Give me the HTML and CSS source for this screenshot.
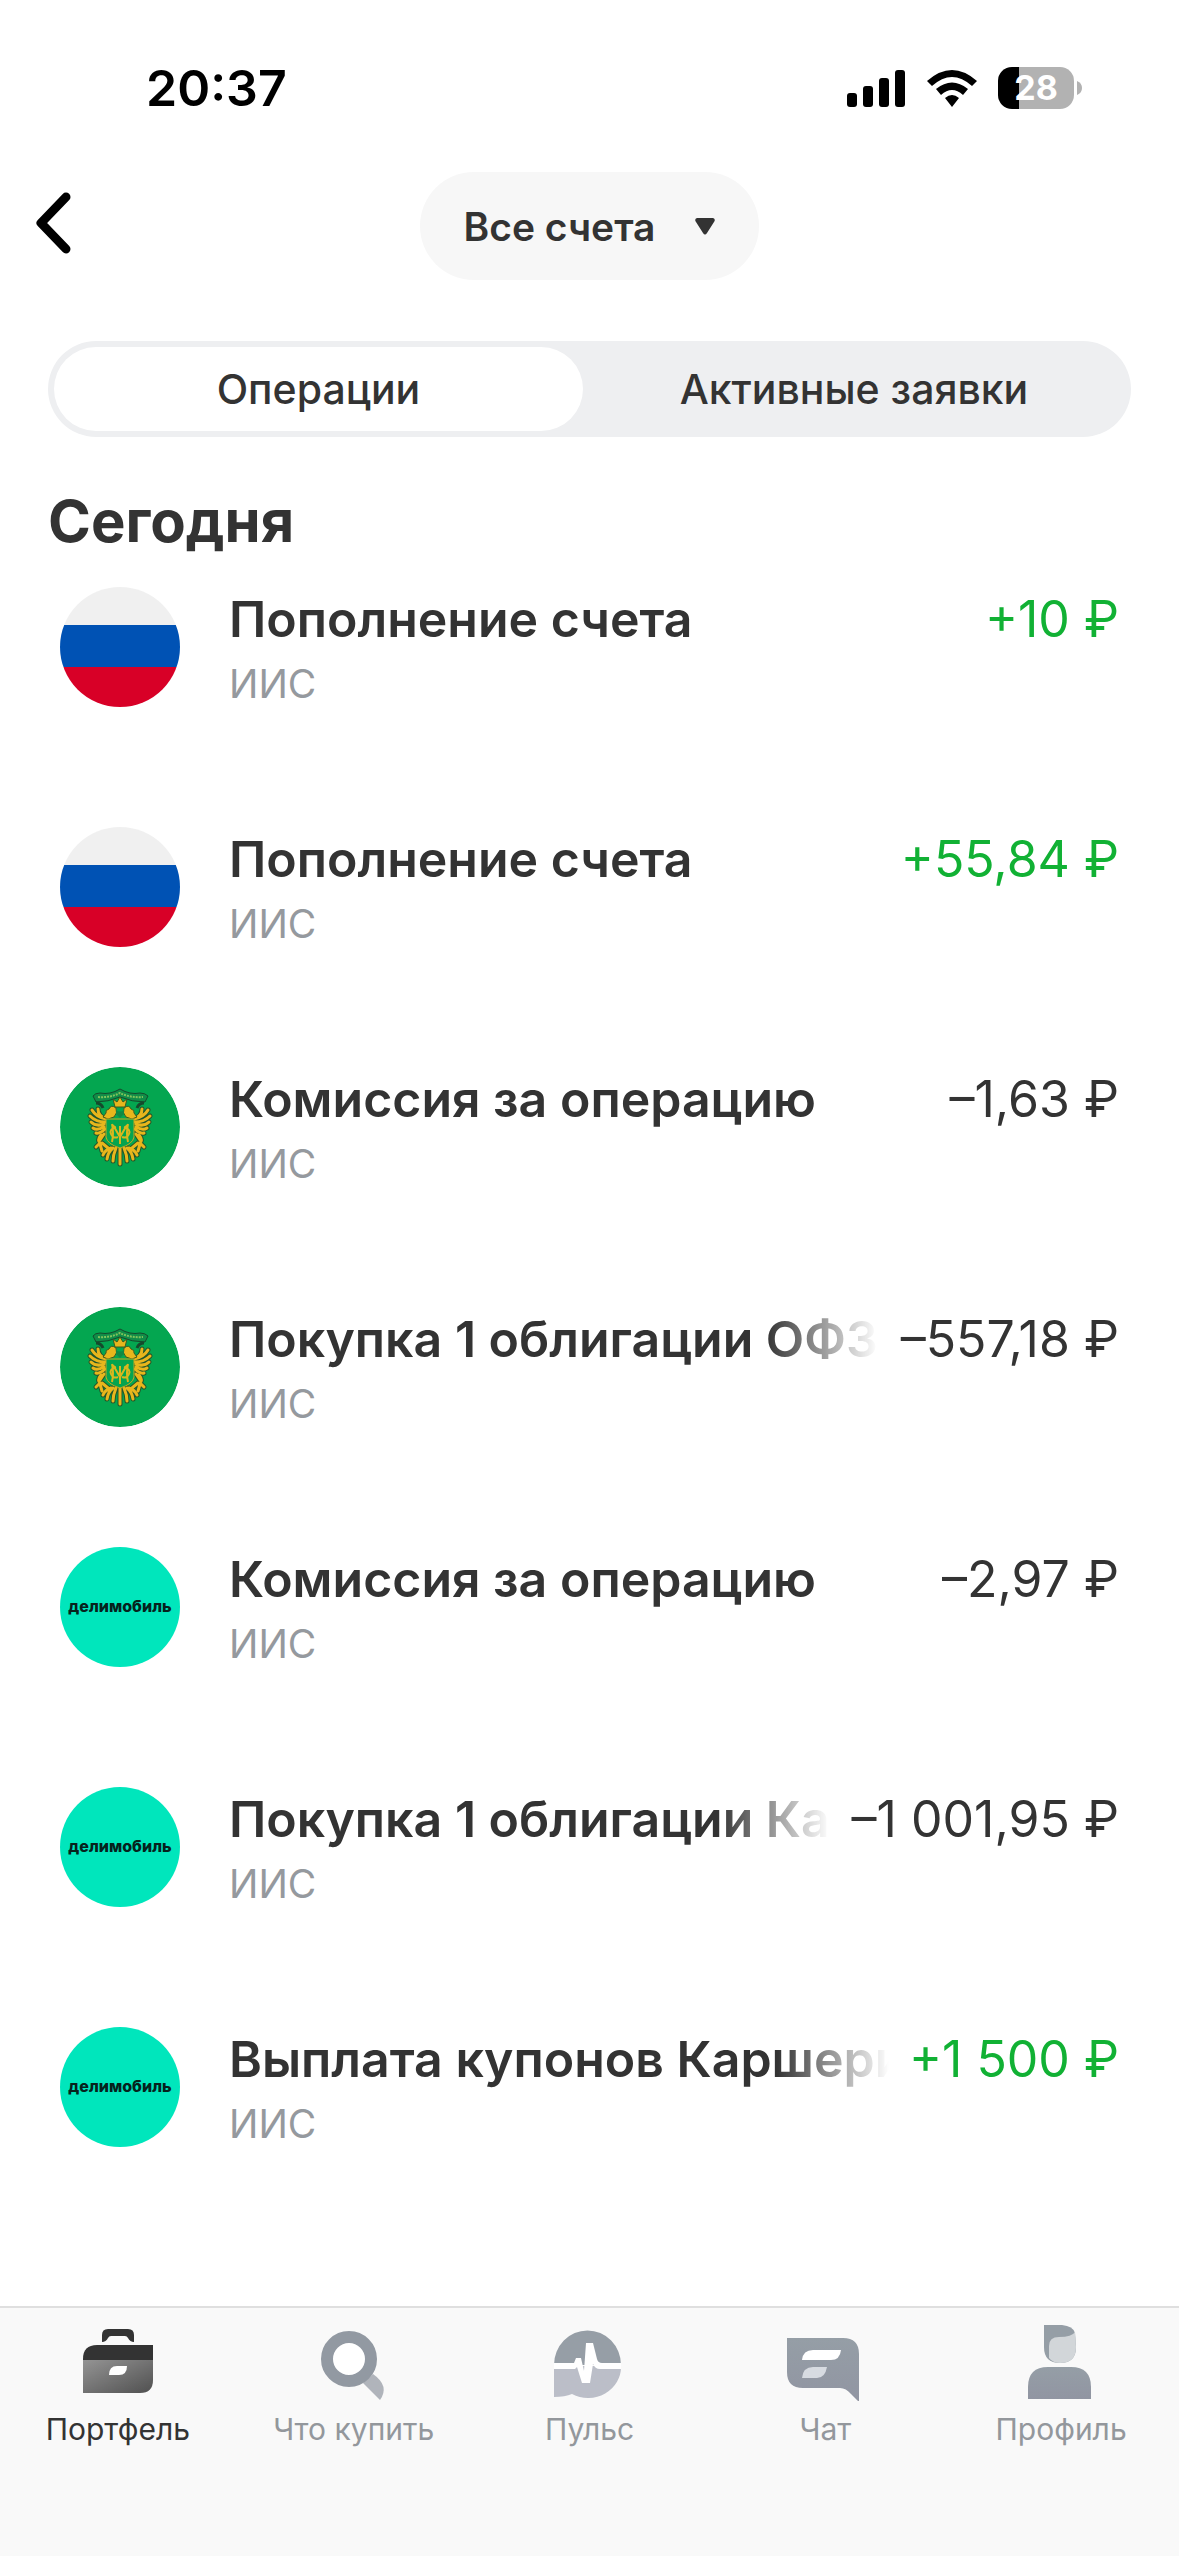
FILE: index.html
```html
<!DOCTYPE html>
<html lang="ru">
<head>
<meta charset="utf-8">
<meta name="viewport" content="width=device-width, initial-scale=1">
<title>Операции</title>
<link rel="stylesheet" href="styles.css">
</head>
<body>
<svg class="defs" aria-hidden="true">
  <defs>
    <linearGradient id="case" x1="0" y1="0" x2="1" y2="1"><stop offset="0" stop-color="#949494"/><stop offset="1" stop-color="#505050"/></linearGradient>
    <linearGradient id="steel" x1="0" y1="0" x2="0" y2="1"><stop offset="0" stop-color="#959ea6"/><stop offset="1" stop-color="#9195a2"/></linearGradient>
    <g id="plumage" fill="none" stroke-linecap="round">
      <path d="M46 52Q36 50 32 43M45 55Q36 55 30 49M44 57Q36 60 31 55M44 60Q37 64 33 61M45 62Q40 67 36 66M38 42Q38 49 46 52"/>
      <path d="M74 52Q84 50 88 43M75 55Q84 55 90 49M76 57Q84 60 89 55M76 60Q83 64 87 61M75 62Q80 67 84 66M82 42Q82 49 74 52"/>
      <path d="M44 67L40 73M41 68Q37 73 40 76M40 76L36 80M40 77L42 84M42 76L48 81M76 67L80 73M79 68Q83 73 80 76M80 76L84 80M80 77L78 84M78 76L72 81"/>
      <path d="M60 81V97M56 81Q53 88 53 94M64 81Q67 88 67 94M53 81Q48 85 47 92M67 81Q72 85 73 92M51 81Q45 83 43 88M69 81Q75 83 77 88"/>
    </g>
    <symbol id="emblem" viewBox="0 0 120 120">
      <circle cx="60" cy="60" r="60" fill="#04a650"/>
      <path d="M33 29Q35 26 40 26Q50 28 60 22Q70 28 80 26Q85 26 88 29L85 35Q72 35 60 30Q48 35 36 35Z" fill="#118c48" stroke="#164a2c"/>
      <path d="M38 30Q50 31 60 26Q70 31 83 30" fill="none" stroke="#7fc45a" stroke-width="2" stroke-dasharray="2 1"/>
      <path d="M36 36q5 0 7 5M84 36q-5 0-7 5" fill="none" stroke="#164a2c" stroke-width="3"/>
      <use href="#plumage" stroke="#24552a" stroke-width="5"/>
      <use href="#plumage" stroke="#e8b61c" stroke-width="3"/>
      <g fill="#e8b61c" stroke="#3c5a20" stroke-width="1">
        <path d="M55 40l-2-8 4 3 3-5 3 5 4-3-2 8z"/>
        <path d="M46 46Q45 43 49 42Q51 37 56 41Q58 46 54 50L48 52L43 50ZM74 46Q75 43 71 42Q69 37 64 41Q62 46 66 50L72 52L77 50Z"/>
      </g>
      <path d="M46 52H74V70Q73 77 60 81Q47 77 46 70Z" fill="#05a44f" stroke="#c3a922" stroke-width="1"/>
      <path d="M52 57Q54 66 52 75M68 57Q66 66 68 75M53 58L60 70L67 58M60 59V77M56 60Q49 62 51 67Q53 72 58 70M64 60Q71 62 69 67Q67 72 62 70" fill="none" stroke="#d9b71e" stroke-width="2"/>
      <path d="M56 43q4 3 8 0v4l-4 4-4-4z" fill="#128844"/>
    </symbol>
  </defs>
</svg>
<div class="screen">
  <div class="status">
    <span class="clock">20:37</span>
    <div class="indicators">
      <svg class="signal" viewBox="0 0 60 40" aria-hidden="true"><rect x="1" y="25" width="10" height="14" rx="3"/><rect x="17" y="18" width="10" height="21" rx="3"/><rect x="33" y="10" width="10" height="29" rx="3"/><rect x="49" y="2" width="10" height="37" rx="3"/></svg>
      <svg class="wifi" viewBox="0 0 52 40" aria-hidden="true"><path d="M1 13Q26-9 51 13L46 18Q26 0 6 18ZM10 21Q26 8 42 21L37 27Q26 17 15 27ZM19 30Q26 24 33 30L26 39Z"/></svg>
      <div class="battery"><span class="level">28</span><svg viewBox="0 0 5 14" aria-hidden="true"><path d="M0 0Q5 2 5 7T0 14Z" fill="#b2b2b2"/></svg></div>
    </div>
  </div>
  <header class="header">
    <button class="back" aria-label="Назад"><svg viewBox="0 0 36 62" aria-hidden="true"><path d="M31 5L6 31L31 57" fill="none" stroke="#000" stroke-width="9" stroke-linecap="round" stroke-linejoin="round"/></svg></button>
    <button class="account">Все счета<svg viewBox="0 0 20 17" aria-hidden="true"><path d="M2 0H18Q21 1 19 4L12 15Q10 18 8 15L1 4Q-1 1 2 0Z" fill="#333"/></svg></button>
  </header>
  <main class="content">
    <div class="tabs" role="tablist">
      <button class="tab active" role="tab" aria-selected="true">Операции</button>
      <button class="tab" role="tab" aria-selected="false">Активные заявки</button>
    </div>
    <h1 class="day">Сегодня</h1>
    <ul class="operations">
      <li class="operation"><span class="avatar flag"></span><div class="details"><div class="line"><span class="name">Пополнение счета</span><span class="sum income">+10 ₽</span></div><span class="kind">ИИС</span></div></li>
      <li class="operation"><span class="avatar flag"></span><div class="details"><div class="line"><span class="name">Пополнение счета</span><span class="sum income">+55,84 ₽</span></div><span class="kind">ИИС</span></div></li>
      <li class="operation"><svg class="avatar" aria-hidden="true"><use href="#emblem"/></svg><div class="details"><div class="line"><span class="name">Комиссия за операцию</span><span class="sum">–1,63 ₽</span></div><span class="kind">ИИС</span></div></li>
      <li class="operation"><svg class="avatar" aria-hidden="true"><use href="#emblem"/></svg><div class="details"><div class="line"><span class="name faded">Покупка 1 облигации ОФЗ</span><span class="sum">–557,18 ₽</span></div><span class="kind">ИИС</span></div></li>
      <li class="operation"><span class="avatar brand">делимобиль</span><div class="details"><div class="line"><span class="name">Комиссия за операцию</span><span class="sum">–2,97 ₽</span></div><span class="kind">ИИС</span></div></li>
      <li class="operation"><span class="avatar brand">делимобиль</span><div class="details"><div class="line"><span class="name faded">Покупка 1 облигации Ка</span><span class="sum">–1 001,95 ₽</span></div><span class="kind">ИИС</span></div></li>
      <li class="operation"><span class="avatar brand">делимобиль</span><div class="details"><div class="line"><span class="name faded">Выплата купонов Каршери</span><span class="sum income">+1 500 ₽</span></div><span class="kind">ИИС</span></div></li>
    </ul>
  </main>
  <nav class="bottom">
    <a class="item current" href="#"><svg viewBox="0 0 80 80" aria-hidden="true"><path d="M24 21V14Q24 8 30 8H50Q56 8 56 14V21Q52 21 50 17Q49 15 47 15H33Q31 15 30 17Q28 21 24 21Z" fill="#333"/><path d="M5 39V38Q5 24 19 24H75V39Z" fill="#333"/><path d="M5 39H75V59Q75 72 62 72H5Z" fill="url(#case)"/><path d="M31 54Q31 45 39 45H49Q49 54 41 54Z" fill="#fff"/></svg>Портфель</a>
    <a class="item" href="#"><svg viewBox="0 0 80 80" aria-hidden="true"><path d="M49 62L59 53Q76 65 66 79Z" fill="#b0b4bb"/><circle cx="35" cy="38" r="22" fill="#fff" stroke="#9299a2" stroke-width="12"/></svg>Что купить</a>
    <a class="item" href="#"><svg viewBox="0 0 80 80" aria-hidden="true"><path d="M5 44A33 34 0 0 1 72 44Z" fill="#969ea6"/><path d="M5 45H72A33 31 0 0 1 23 73Q16 76 5 76Z" fill="#bbbec8"/><path d="M5 42H25L27 37H32L35 50L37 22H44L48 38Q49 42 53 42H72V48H51Q46 48 44 43L41 62H33L28 46L26 48H5Z" fill="#fff"/></svg>Пульс</a>
    <a class="item" href="#"><svg viewBox="0 0 80 80" aria-hidden="true"><path d="M2 17H58Q74 17 74 33V81L66 73Q61 67 55 67H18Q2 67 2 51Z" fill="url(#steel)"/><path d="M17 39Q18 29 28 29H56Q55 39 46 39Z" fill="#fff"/><path d="M17 57Q18 46 28 46H42Q40 57 32 57Z" fill="#d7dbe1"/></svg>Чат</a>
    <a class="item" href="#"><svg viewBox="0 0 80 80" aria-hidden="true"><path d="M23 4H41Q52 5 54 12L55 26Q55 42 39 42Q23 42 23 26Z" fill="#959ea6"/><path d="M28 37V25Q28 16 38 16Q51 16 54 11L55 26Q55 42 39 42Q32 42 28 37Z" fill="#d2d6d9"/><path d="M7 78V66Q7 46 27 46H50Q70 46 70 66V78Z" fill="url(#steel)"/></svg>Профиль</a>
  </nav>
</div>
</body>
</html>
```
FILE: styles.css
```css
* { box-sizing: border-box; }
body { margin: 0; background: #fff; color: #333; font-family: Inter, "Noto Sans", sans-serif; }
button { border: 0; padding: 0; background: none; color: inherit; font: inherit; }
svg { display: block; }
.defs { position: absolute; width: 0; height: 0; }
.screen { display: flex; flex-direction: column; min-height: 100vh; }

.status { display: flex; justify-content: space-between; align-items: center; height: 172px; padding: 4px 97px 0 146px; color: #000; }
.clock { font-size: 50px; font-weight: 600; line-height: 60px; }
.indicators { display: flex; align-items: center; gap: 20px; }
.signal { width: 60px; height: 40px; }
.wifi { width: 52px; height: 40px; }
.battery { display: flex; align-items: center; gap: 3px; }
.battery svg { width: 5px; height: 14px; }
.level { width: 76px; border-radius: 14px; background: linear-gradient(90deg, #000 28%, #b2b2b2 28%); color: #fff; font-size: 34px; font-weight: 700; line-height: 42px; text-align: center; }

.header { display: grid; grid-template-columns: 1fr auto 1fr; align-items: center; padding: 0 35px; }
.back { justify-self: start; padding-bottom: 6px; }
.back svg { width: 36px; height: 62px; }
.account { display: flex; align-items: center; gap: 40px; height: 108px; padding: 0 44px; border-radius: 54px; background: #f7f7f7; font-size: 39px; font-weight: 600; }
.account svg { width: 20px; height: 17px; }

.content { flex: 1; padding: 61px 48px 0; }
.tabs { display: grid; grid-template-columns: 529fr 542fr; padding: 6px; border-radius: 48px; background: #eeeff1; }
.tab { height: 84px; border-radius: 42px; font-size: 41px; font-weight: 500; }
.tab.active { background: #fff; }
.day { margin: 50px 0 32px; font-size: 58px; font-weight: 700; line-height: 68px; }
.operations { margin: 0; padding: 0 12px; list-style: none; }
.operation { display: flex; gap: 49px; height: 240px; }
.avatar { flex: none; width: 120px; height: 120px; border-radius: 60px; }
.flag { background: linear-gradient(#f0f0f0 38px, #0052b4 38px 80px, #d80027 80px); }
.brand { background: #00e6bc; color: #06231d; font-size: 16px; font-weight: 800; line-height: 118px; text-align: center; }
.details { flex: 1; min-width: 0; }
.line { display: flex; justify-content: space-between; gap: 20px; font-size: 50px; line-height: 64px; white-space: nowrap; }
.name { min-width: 0; overflow: hidden; font-weight: 600; }
.faded { -webkit-mask-image: linear-gradient(90deg, #000 calc(100% - 112px), transparent); mask-image: linear-gradient(90deg, #000 calc(100% - 112px), transparent); }
.sum { flex: none; }
.income { color: #11b134; }
.kind { display: block; margin-top: 8px; color: #95999e; font-size: 39px; line-height: 50px; }

.bottom { display: grid; grid-template-columns: repeat(5, 1fr); height: 250px; padding-top: 13px; border-top: 2px solid #dfdfdf; background: #f9f9f9; }
.item { display: flex; flex-direction: column; align-items: center; gap: 10px; color: #93979c; font-size: 30px; line-height: 36px; text-decoration: none; }
.item svg { width: 80px; height: 80px; }
.current { color: #333; }
```
